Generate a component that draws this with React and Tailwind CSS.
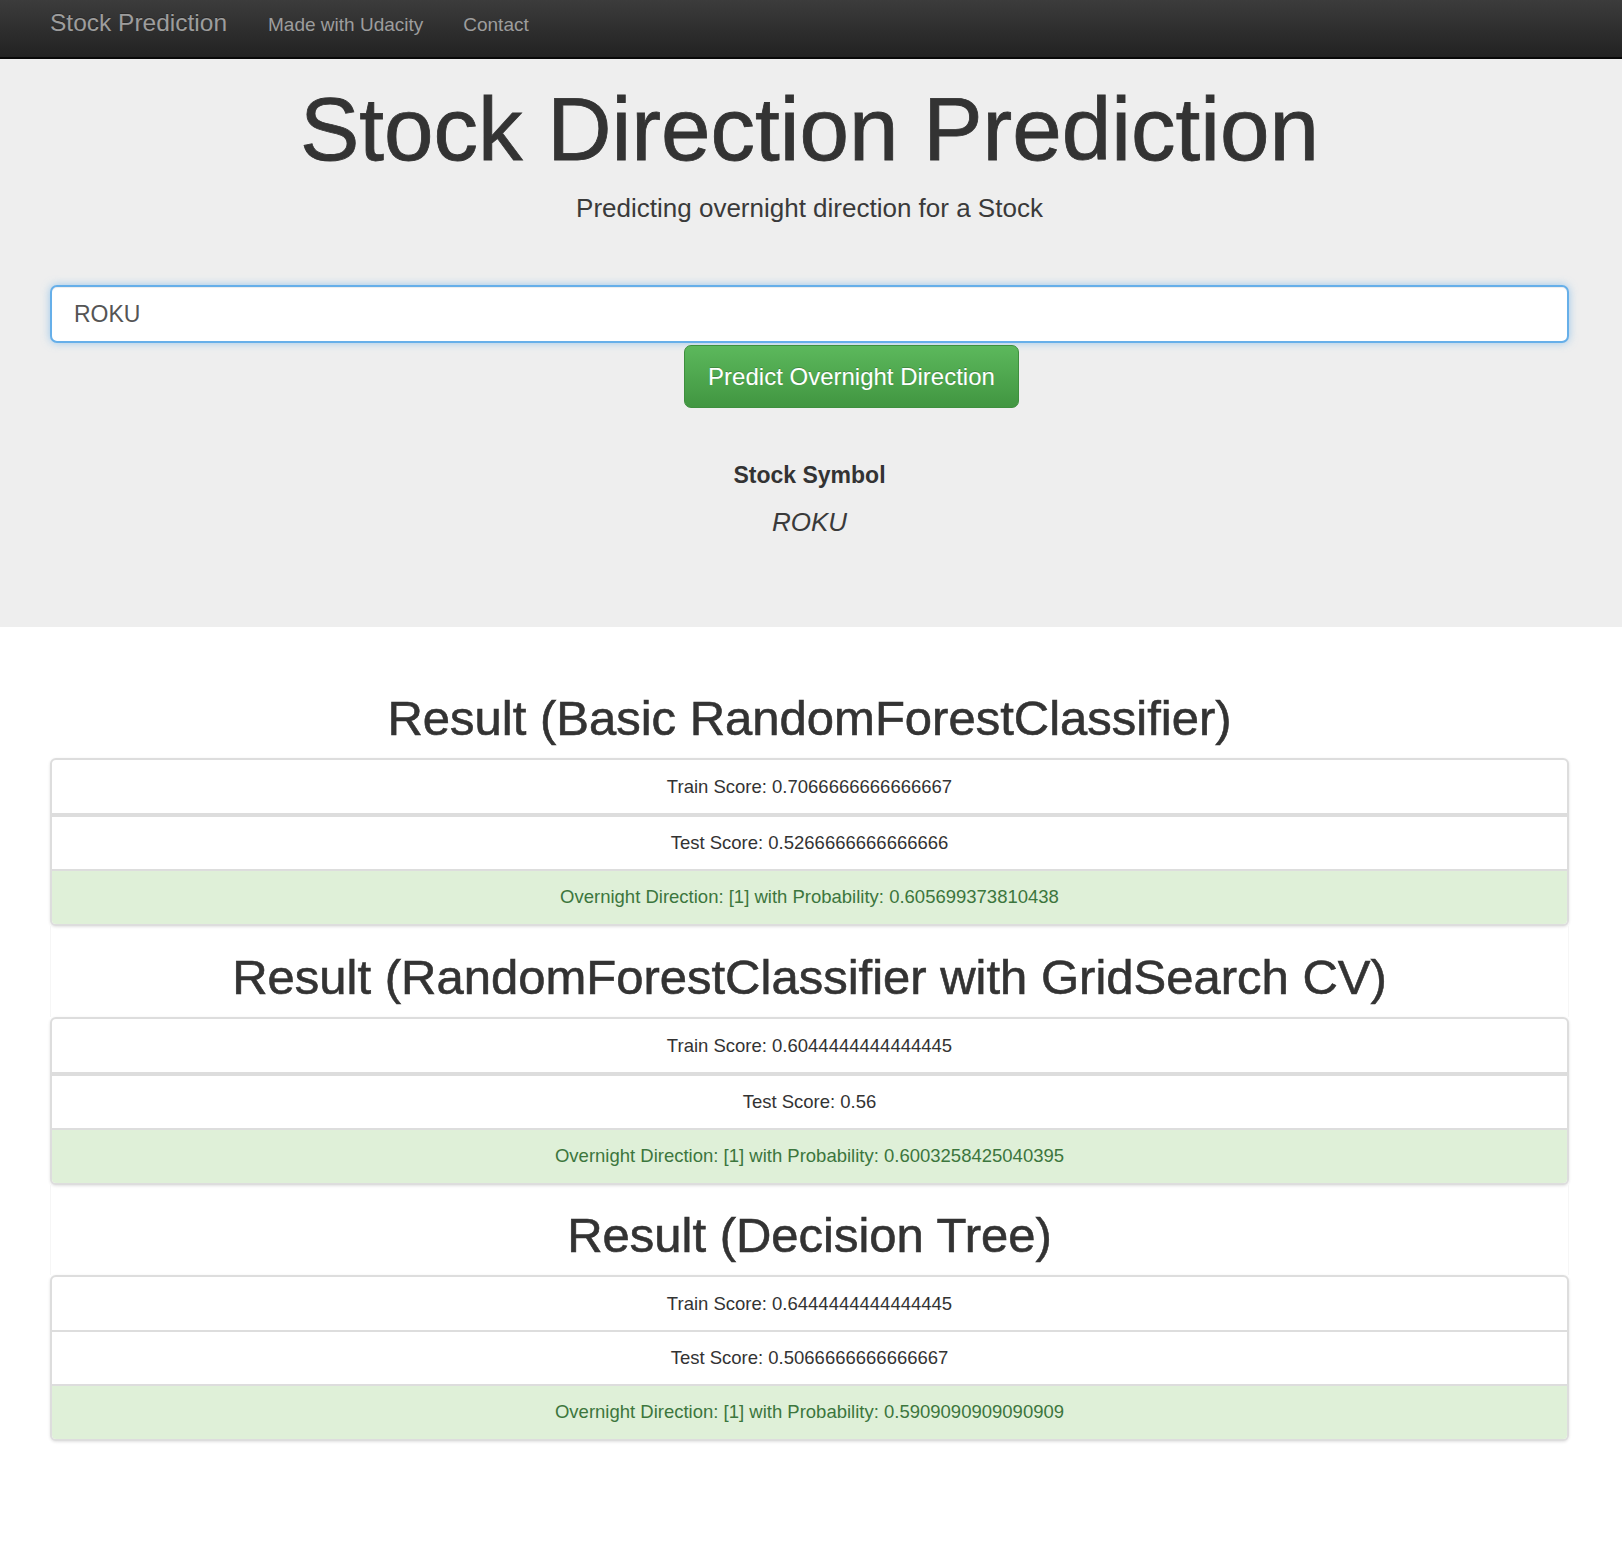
import React from "react";

const RESULTS = [
  {
    title: "Result (Basic RandomForestClassifier)",
    train: "0.7066666666666667",
    test: "0.5266666666666666",
    prob: "0.605699373810438",
    thick: true,
  },
  {
    title: "Result (RandomForestClassifier with GridSearch CV)",
    train: "0.6044444444444445",
    test: "0.56",
    prob: "0.6003258425040395",
    thick: true,
  },
  {
    title: "Result (Decision Tree)",
    train: "0.6444444444444445",
    test: "0.5066666666666667",
    prob: "0.5909090909090909",
    thick: false,
  },
];

function ResultList({ train, test, prob, thick }) {
  return (
    <div className="overflow-hidden rounded-[6px] border-2 border-[#dddddd] bg-white text-[18.5px] text-[#333333] shadow-[0_1px_3px_rgba(0,0,0,0.12)]">
      <div className="flex h-[53px] items-center justify-center pt-[2px]">
        Train Score: {train}
      </div>
      <div
        className={`flex items-center justify-center border-[#dddddd] ${
          thick ? "h-[56px] border-t-4" : "h-[54px] border-t-2"
        }`}
      >
        Test Score: {test}
      </div>
      <div className="flex h-[55px] items-center justify-center border-t-2 border-[#dddddd] bg-[#dff0d8] text-[#3c763d]">
        Overnight Direction: [1] with Probability: {prob}
      </div>
    </div>
  );
}

function Heading({ children }) {
  return (
    <h2 className="text-center text-[49px] leading-[1.1] text-[#333333] [-webkit-text-stroke:0.6px_#333333]">
      {children}
    </h2>
  );
}

export default function App() {
  return (
    <div className="min-h-[1550px] bg-white font-['Liberation_Sans',Arial,sans-serif] text-[#333333]">
      {/* navbar */}
      <nav className="flex h-[59px] items-start border-b-2 border-[#080808] bg-linear-to-b from-[#3c3c3c] to-[#222222]">
        <span className="ml-[50px] mt-[6px] text-[24.5px] leading-[34px] text-[#9d9d9d] [text-shadow:0_-1px_0_rgba(0,0,0,0.25)]">
          Stock Prediction
        </span>
        <div className="ml-[41px] mt-[12px] flex gap-[40px] text-[19px] leading-[26px] text-[#9d9d9d]">
          <a>Made with Udacity</a>
          <a>Contact</a>
        </div>
      </nav>

      {/* jumbotron */}
      <div className="bg-[#eeeeee] pb-[86px] pl-[50px] pr-[53px] pt-[22px]">
        <h1 className="text-center text-[89px] leading-[1.1] text-[#333333] [-webkit-text-stroke:0.8px_#333333]">
          Stock Direction Prediction
        </h1>
        <p className="mt-[11px] text-center text-[26px] leading-[1.4] text-[#3a3a3a]">
          Predicting overnight direction for a Stock
        </p>
        <input
          readOnly
          defaultValue="ROKU"
          className="mt-[59px] block h-[58px] w-full rounded-[7px] border-2 border-[#66afe9] bg-white pl-[22px] text-[23px] text-[#555555] shadow-[inset_0_1px_1px_rgba(0,0,0,0.075),0_0_9px_rgba(102,175,233,0.6)] outline-none"
        />
        <button className="ml-[634px] mt-[2px] block h-[63px] w-[335px] rounded-[7px] border border-[#3e8f3e] bg-linear-to-b from-[#5cb85c] to-[#419641] text-center text-[24px] text-white [text-shadow:0_-1px_0_rgba(0,0,0,0.2)]">
          Predict Overnight Direction
        </button>
        <div className="mt-[51px] text-center text-[23px] font-bold leading-[1.4]">
          Stock Symbol
        </div>
        <div className="mt-[13px] text-center text-[26px] italic leading-[1.4] text-[#3a3a3a]">
          ROKU
        </div>
      </div>

      {/* results */}
      <div className="pl-[50px] pr-[53px]">
        <div className="pb-[12px] pt-[65px]">
          <Heading>{RESULTS[0].title}</Heading>
        </div>
        <ResultList {...RESULTS[0]} />
        <div className="border-x border-[#f6f6f6] pb-[12px] pt-[25px]">
          <Heading>{RESULTS[1].title}</Heading>
        </div>
        <ResultList {...RESULTS[1]} />
        <div className="border-x border-[#f6f6f6] pb-[12px] pt-[24px]">
          <Heading>{RESULTS[2].title}</Heading>
        </div>
        <ResultList {...RESULTS[2]} />
      </div>
    </div>
  );
}
